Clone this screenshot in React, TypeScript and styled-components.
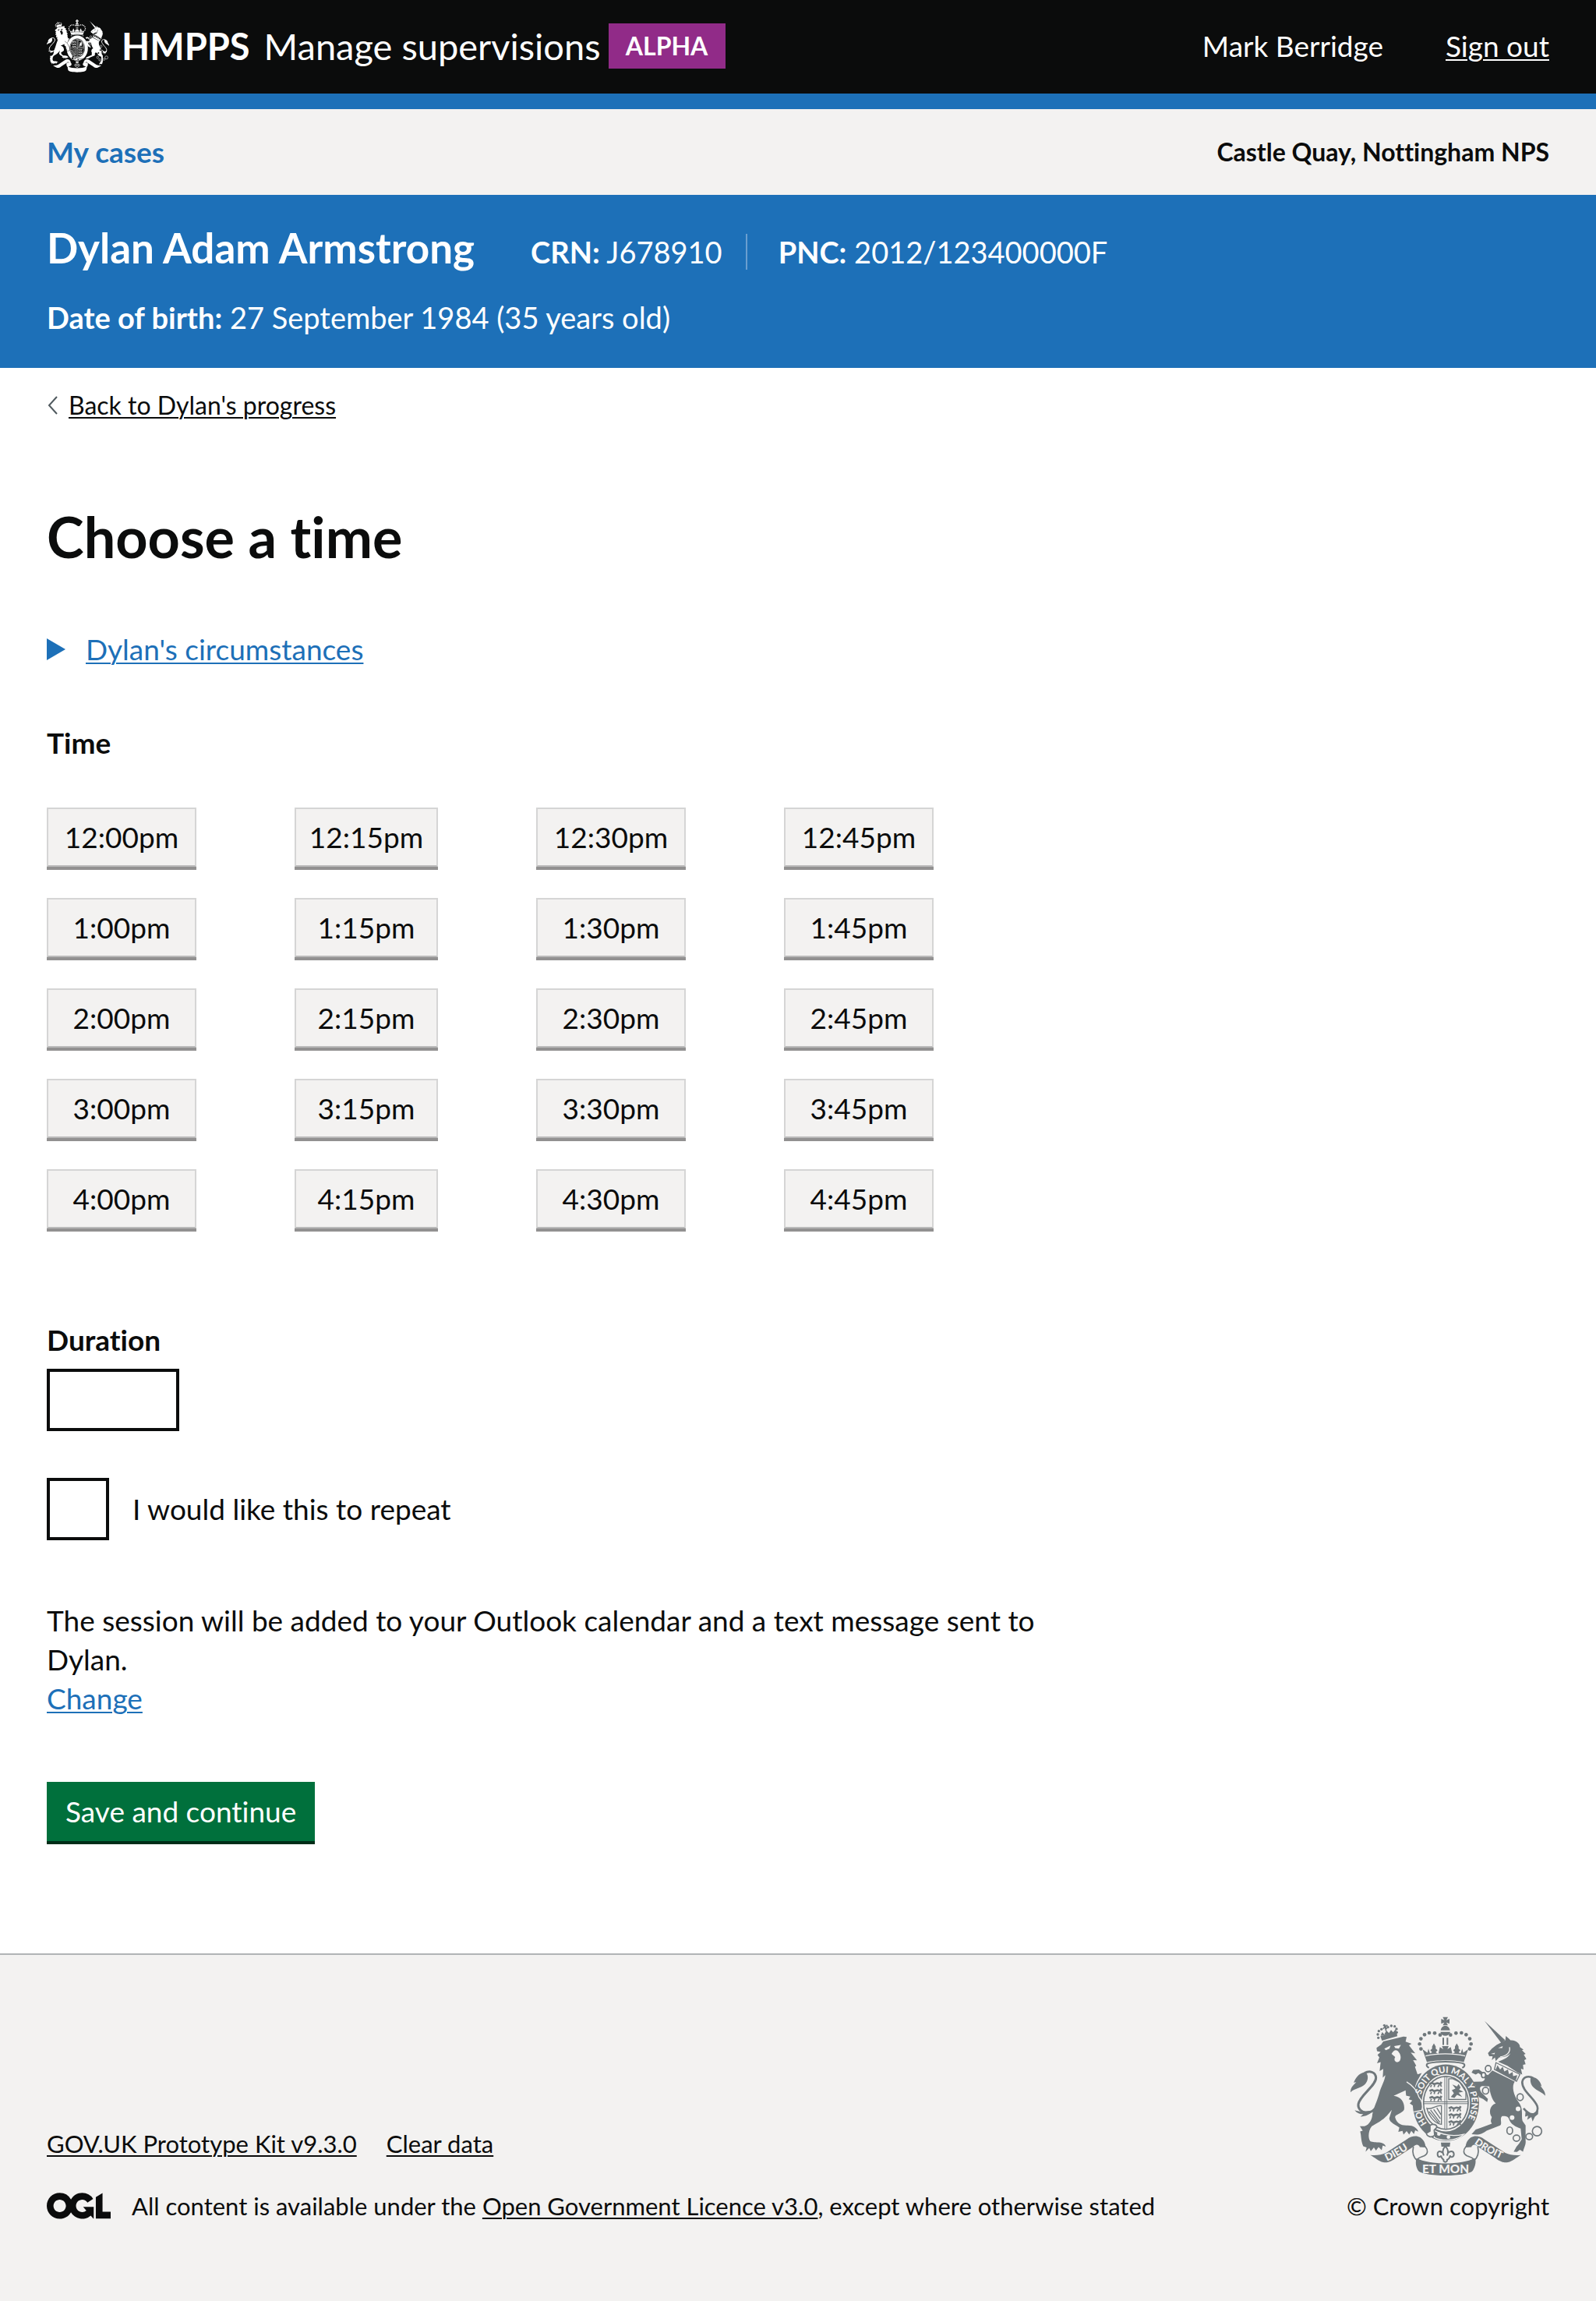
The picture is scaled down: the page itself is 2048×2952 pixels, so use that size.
import React from 'react';
import styled, { createGlobalStyle } from 'styled-components';

const ink = '#0b0c0c';
const blue = '#1d70b8';
const grey = '#f3f2f1';

const GlobalStyle = createGlobalStyle`
  *, *::before, *::after { box-sizing: border-box; }
  body {
    margin: 0;
    background: ${grey};
    color: ${ink};
    font-family: Lato, "Liberation Sans", sans-serif;
    font-size: 37px;
    line-height: 50px;
    font-variant-ligatures: none;
  }
  h1, h2, p, ul, dl, dd { margin: 0; padding: 0; }
  ul { list-style: none; }
  button, input { font: inherit; font-variant-ligatures: none; color: inherit; margin: 0; border-radius: 0; }
`;

const TextLink = styled.a<{ $color?: string }>`
  color: ${(p) => p.$color ?? ink};
  text-decoration: underline;
  text-decoration-thickness: 2px;
  text-underline-offset: 3px;
`;

/* Header */

const Header = styled.header`
  display: flex;
  align-items: center;
  justify-content: space-between;
  padding: 25px 60px 27px;
  background: ${ink};
  color: #fff;
  border-bottom: 20px solid ${blue};
  line-height: 60px;
`;

const Brand = styled.div`
  display: flex;
  align-items: center;
  font-size: 47px;
`;

const Organisation = styled.strong`
  margin: 0 18px 0 16px;
`;

const PhaseTag = styled.strong`
  min-width: 150px;
  margin-left: 10px;
  padding: 0 16px;
  background: #912b88;
  font-size: 32px;
  line-height: 58px;
  text-align: center;
`;

const Account = styled.nav`
  display: flex;
  gap: 80px;
`;

const PrimaryNav = styled.nav`
  display: flex;
  align-items: center;
  justify-content: space-between;
  padding: 30px 60px;
  background: ${grey};
  font-weight: 700;
`;

const NavLink = styled.a`
  color: ${blue};
  text-decoration: none;
`;

const Office = styled.span`
  font-size: 32px;
`;

/* Person banner */

const Banner = styled.section`
  display: grid;
  gap: 32px;
  padding: 36px 60px 40px;
  background: ${blue};
  color: #fff;
  font-size: 38px;
`;

const BannerRow = styled.div`
  display: flex;
  align-items: baseline;
  gap: 72px;
`;

const PersonName = styled.h2`
  font-size: 53px;
  line-height: 64px;
`;

const Identifiers = styled.ul`
  display: flex;
  line-height: 46px;
`;

const Identifier = styled.li`
  & + & {
    margin-left: 30px;
    padding-left: 40px;
    border-left: 2px solid #6a9fd0;
  }
`;

/* Main content */

const Main = styled.main`
  padding: 28px 60px 144px;
  background: #fff;
`;

const BackRow = styled.div`
  display: flex;
  align-items: center;
  gap: 14px;
  margin-bottom: 108px;
  font-size: 32px;
  line-height: 40px;
`;

const Column = styled.div`
  width: 66.66%;
`;

const Title = styled.h1`
  margin-bottom: 80px;
  font-size: 72px;
  line-height: 80px;
`;

const Details = styled.details`
  margin-bottom: 70px;
`;

const Summary = styled.summary`
  display: flex;
  align-items: center;
  gap: 26px;
  width: fit-content;
  cursor: pointer;
  &::-webkit-details-marker { display: none; }
`;

const GroupHeading = styled.h2`
  margin-bottom: 58px;
  font-size: 37px;
`;

const TimeGrid = styled.ul`
  display: grid;
  grid-template-columns: 192px 184px 192px 192px;
  gap: 40px 126px;
  margin-bottom: 118px;
`;

const Button = styled.button`
  height: 76px;
  padding: 0 24px;
  border: 0;
  background: #00703c;
  color: #fff;
  box-shadow: 0 4px 0 #002d18;
  white-space: nowrap;
  cursor: pointer;
`;

const TimeButton = styled(Button)`
  width: 100%;
  padding: 0;
  border: 2px solid #d5d5d5;
  border-bottom-color: #bababa;
  background: ${grey};
  color: ${ink};
  box-shadow: 0 4px 0 #929191;
`;

const Field = styled.div`
  display: flex;
  flex-direction: column;
  align-items: flex-start;
  gap: 12px;
  margin-bottom: 60px;
`;

const FieldLabel = styled.label`
  font-weight: 700;
`;

const DurationInput = styled.input`
  width: 170px;
  height: 80px;
  padding: 10px;
  border: 4px solid ${ink};
  background: #fff;
`;

const CheckRow = styled.div`
  display: flex;
  align-items: center;
  gap: 30px;
  margin-bottom: 78px;
`;

const Checkbox = styled.input`
  appearance: none;
  width: 80px;
  height: 80px;
  border: 4px solid ${ink};
  background: #fff;
  &:checked { box-shadow: inset 0 0 0 14px #fff; background: ${ink}; }
`;

const Note = styled.p`
  margin-bottom: 82px;
`;

/* Footer */

const Footer = styled.footer`
  display: flex;
  align-items: flex-end;
  justify-content: space-between;
  padding: 79px 60px 97px;
  border-top: 2px solid #b1b4b6;
  background: ${grey};
  font-size: 31px;
`;

const FooterMeta = styled.div`
  display: grid;
  gap: 30px;
`;

const FooterLinks = styled.ul`
  display: flex;
  gap: 38px;
`;

const Licence = styled.div`
  display: flex;
  align-items: center;
  gap: 27px;
`;

const Copyright = styled.div`
  display: flex;
  flex-direction: column;
  align-items: center;
  gap: 13px;
`;

/* Drawings */

const CROWN_BEADS = [
  [441, 393], [420, 386], [399, 385], [381, 392], [367, 408], [362, 428], [367, 447],
];

const GARTER_LINE = 'M463 771 A99 116 0 0 1 463 539 A99 116 0 0 1 463 771';

function Lions({ x, y, color }: { x: number; y: number; color: string }) {
  return (
    <g fill="none" stroke={color} strokeWidth="5">
      {[0, 27, 54].map((dy) => (
        <g key={dy}>
          <path d={`M${x} ${y + dy} l10 -4 l8 5 l12 -4 l12 3 l4 -8`} strokeWidth="8" />
          <path d={`M${x + 4} ${y + dy + 12} l4 -8 M${x + 18} ${y + dy + 12} l2 -9 M${x + 32} ${y + dy + 12} l6 -9 M${x + 46} ${y + dy + 11} l-4 -9`} />
        </g>
      ))}
    </g>
  );
}

function RoyalArms({ width, height, color, paper, motto }: {
  width: number; height: number; color: string; paper: string; motto?: boolean;
}) {
  return (
    <svg width={width} height={height} viewBox="96 322 750 616" preserveAspectRatio="none" fill={color} aria-hidden="true">
      {/* lion */}
      <path d="M196 443 L214 430 L222 418 L300 399 L312 401 L308 419 L331 427 L321 433 L345 464 L328 461 L352 491 L337 490 L349 512 L344 516 L354 545 L370 540 L352 572 L345 590 L352 620 C360 635 372 645 372 668 L366 681 L358 668 L355 683 L346 670 L342 683 L336 665 L324 657 L334 646 L320 641 L326 631 L310 627 L308 607 L262 628 C296 632 306 662 302 682 C292 698 264 700 268 712 C275 735 290 742 310 742 C335 740 352 750 357 766 L345 761 L340 775 L330 763 L322 777 L312 764 L300 777 L296 763 L280 767 L284 750 C268 738 247 732 245 715 L255 682 L238 702 C222 722 195 735 178 745 C165 760 162 790 172 803 C190 812 225 800 232 824 L220 819 L216 837 L204 825 L194 839 L186 827 L174 841 L168 829 L154 843 L158 827 L145 822 C135 800 138 780 133 765 L143 762 L132 745 L150 745 C170 740 180 715 180 700 C186 670 198 650 206 620 C214 590 228 570 230 548 L220 558 L222 524 L208 532 L212 498 L198 502 L207 480 L200 470 L212 459 L198 456 Z" />
      <path d="M226 446 L250 434 L246 446 L232 452 Z M264 436 L290 432 L282 446 L268 444 Z M254 466 C262 448 276 448 282 460 C292 470 292 496 278 498 C266 498 262 488 268 478 Z" fill={paper} />
      <path d="M200 662 C180 710 122 695 126 660 C132 625 194 590 194 558 C192 534 168 530 150 540" fill="none" stroke={color} strokeWidth="9" />
      <path d="M154 536 C125 540 115 562 108 577 L118 575 C104 590 96 596 96 614 C110 600 135 598 150 585 C160 575 166 560 160 545 Z" />
      <path d="M150 688 C140 689 125 688 112 683 C120 695 133 699 145 698 L134 708 C155 707 172 700 182 684 Z" />
      {/* lion's crown */}
      <path d="M211 398 L274 382 L276 398 L217 415 Z M212 396 L218 382 L226 391 L234 376 L244 386 L252 374 L260 383 L270 371 L274 384 Z" />
      <path d="M222 354 L236 370 M238 355 L221 369 M227 352 L233 378" stroke={color} strokeWidth="5" />
      {[[203, 404], [201, 391], [205, 378], [215, 371], [240, 363], [253, 358], [266, 360], [273, 370], [274, 383]].map(([cx, cy]) => (
        <circle key={`${cx}-${cy}`} cx={cx} cy={cy} r="5" />
      ))}
      {/* imperial crown */}
      <path d="M451 324 L471 324 L465 336 L477 331 L477 350 L465 345 L471 356 L451 356 L457 345 L445 350 L445 331 L457 336 Z" />
      <path d="M443 375 C446 362 453 358 461 358 C469 358 476 362 479 375 Z M442 381 H480 C478 391 470 396 461 396 C452 396 444 391 442 381 Z" />
      {CROWN_BEADS.map(([cx, cy]) => (
        <g key={cy}>
          <circle cx={cx} cy={cy} r="7" />
          <circle cx={922 - cx} cy={cy} r="7" />
        </g>
      ))}
      <path d="M453 404 V432 M469 404 V432" stroke={color} strokeWidth="6" />
      <path d="M373 448 L392 462 L396 446 L402 464 L410 460 L403 452 L410 446 L410 438 L417 426 L424 438 L424 446 L431 452 L424 460 L434 466 L440 440 L453 448 L448 436 L474 436 L469 448 L482 440 L488 466 L498 460 L491 452 L498 446 L498 438 L505 426 L512 438 L512 446 L519 452 L512 460 L520 464 L526 446 L530 462 L549 448 L532 498 C500 489 422 489 390 498 Z" />
      <path d="M385 474 C430 463 492 463 537 474" fill="none" stroke={paper} strokeWidth="4" />
      {/* garter */}
      <path d="M398 520 C384 512 388 503 398 502 C430 494 492 494 526 502 C538 504 538 514 526 520" fill="none" stroke={color} strokeWidth="6" />
      <ellipse cx="463" cy="655" rx="128" ry="148" />
      <ellipse cx="463" cy="655" rx="93" ry="110" fill={paper} />
      <ellipse cx="463" cy="655" rx="86" ry="102" fill="none" stroke={color} strokeWidth="5" />
      <path d="M459 553 V757 M467 553 V757 M377 651 H549 M377 658 H549" stroke={color} strokeWidth="3" />
      <Lions x={400} y={582} color={color} />
      <Lions x={474} y={676} color={color} />
      <path d="M474 562 V642 H540 V612 L516 575 L490 562 Z" fill="none" stroke={color} strokeWidth="4" />
      <path d="M482 632 L494 618 L486 606 L500 600 L488 584 L506 592 L512 582 L520 596 L514 604 L530 612 L512 616 L526 632 L506 624 L496 636 Z" />
      <path d="M390 676 C410 684 424 662 446 666 V738 C420 734 398 708 390 676 Z M404 682 L440 730 M416 680 L442 716 M428 674 L444 700 M398 688 L436 734" fill="none" stroke={color} strokeWidth="4" />
      {/* foreleg over the garter */}
      <path d="M312 574 C336 588 352 606 360 634 C372 645 378 668 370 684 L340 690" fill="none" stroke={paper} strokeWidth="4" />
      {motto && (
        <g fill={paper} fontFamily="Lato, sans-serif" fontSize="34" fontWeight="900">
          <path id="garter-line" d={GARTER_LINE} fill="none" />
          <text><textPath href="#garter-line" startOffset="84">HO</textPath></text>
          <text><textPath href="#garter-line" startOffset="200">SOIT QUI MAL Y PENSE</textPath></text>
        </g>
      )}
      {/* buckle and belt end */}
      <path d="M418 762 C450 778 490 786 532 776 C510 800 450 806 418 788 Z" stroke={paper} strokeWidth="4" />
      <path d="M402 742 C412 734 430 738 428 750 L418 760 L420 780 C408 790 390 786 388 772 L402 764 Z" fill={paper} stroke={color} strokeWidth="5" />
      <circle cx="436" cy="775" r="7" fill={paper} />
      <circle cx="473" cy="787" r="7" fill={paper} />
      {/* pendant */}
      <path d="M444 808 H480 L478 824 H446 Z" />
      <path d="M461 822 C446 838 452 850 455 858 C452 838 430 838 431 852 C431 864 442 868 444 858 C446 866 450 872 454 874 C452 886 470 886 468 874 C474 872 478 866 479 858 C482 868 494 864 494 852 C492 838 470 838 468 858 C472 850 476 838 461 822 Z" fill={paper} stroke={color} strokeWidth="6" />
      {/* unicorn */}
      <path d="M612 339 L691 413 L677 425 Z" />
      <path d="M625 463 L640 446 L658 432 L692 414 L694 397 L706 408 L712 414 C735 412 750 430 748 440 L762 450 L756 452 L770 466 L763 469 L773 486 L765 490 L770 506 L760 508 L762 526 L752 523 L757 546 L740 538 L700 512 L664 496 C690 488 708 476 712 462 C708 472 690 480 668 480 L655 494 L652 480 L640 490 L643 475 L630 475 Z" />
      <path d="M664 444 L682 436 L680 444 Z M636 466 L652 462 L650 468 Z" fill={paper} />
      <path d="M672 478 C700 474 712 458 708 440" fill="none" stroke={paper} strokeWidth="4" />
      <path d="M656 500 L748 545 L735 572 L650 526 Z" fill={paper} stroke={color} strokeWidth="4" />
      <path d="M654 528 L662 510 L672 526 L682 516 L688 534 L702 526 L706 544 L720 536 L722 552 L738 548 L732 570 Z" />
      <path d="M642 530 L728 573 C716 590 722 625 745 655 C762 680 753 700 758 725 L770 742 L770 800 C772 815 765 825 760 843 L748 836 L737 844 L724 843 L735 824 L745 812 L755 795 L751 754 C735 748 712 740 705 715 C700 705 688 706 680 706 C668 715 682 735 672 742 L620 762 C605 772 598 777 580 777 L562 776 L578 758 L600 750 L640 735 C633 725 638 718 640 710 C628 695 630 665 655 657 C640 645 632 612 630 592 L604 590 C592 592 592 602 600 615 L625 640 L622 652 L606 640 L592 634 C580 612 572 600 577 588 L568 574 L602 573 C612 570 616 562 610 556 L588 540 L578 546 L562 538 L568 528 L590 526 L612 542 L625 548 Z" />
      <g fill={paper} stroke={color} strokeWidth="5">
        <ellipse cx="626" cy="523" rx="11" ry="12" />
        <ellipse cx="608" cy="548" rx="8" ry="10" />
        <ellipse cx="616" cy="608" rx="12" ry="13" />
        <ellipse cx="749" cy="633" rx="12" ry="13" />
        <ellipse cx="709" cy="762" rx="11" ry="14" />
        <ellipse cx="735" cy="791" rx="13" ry="12" />
        <ellipse cx="784" cy="785" rx="13" ry="12" />
        <circle cx="814" cy="764" r="18" />
      </g>
      <circle cx="741" cy="678" r="9" fill={paper} />
      <circle cx="718" cy="712" r="9" fill={paper} />
      <path d="M762 676 C800 720 822 690 815 668 C805 638 755 608 757 575 C760 552 785 550 800 560" fill="none" stroke={color} strokeWidth="8" />
      <path d="M790 556 C815 555 828 575 832 592 L826 588 C835 600 846 610 846 628 C835 615 812 608 800 595 C790 585 786 570 790 556 Z" />
      <path d="M770 688 L768 708 L780 704 L776 720 L792 710 L797 727 L806 708 L818 698 L819 678 C805 700 790 700 770 688 Z" />
      {/* ribbon */}
      {[false, true].map((flip) => (
        <g key={String(flip)} transform={flip ? 'translate(924 0) scale(-1 1)' : undefined}>
          <path d="M172 856 C195 858 215 856 232 848 L312 796 C330 782 350 780 364 788 C380 800 384 812 385 826 L362 823 C354 812 346 816 338 824 L270 868 C250 884 235 886 222 884 C205 880 190 866 172 856 Z" />
          <path d="M362 823 L384 824 C396 838 394 852 380 859 C362 866 352 868 354 880 C338 866 332 850 338 824" fill={motto ? paper : color} stroke={color} strokeWidth="5" />
        </g>
      ))}
      <path d="M350 868 C400 895 524 895 574 868 C581 878 577 898 568 914 C556 942 368 942 355 914 C346 898 346 880 350 868 Z" />
      {motto && (
        <g fill={paper} fontFamily="Lato, sans-serif" fontWeight="900">
          <path id="ribbon-left" d="M236 880 Q290 856 348 812" fill="none" />
          <path id="ribbon-right" d="M572 812 Q630 854 704 882" fill="none" />
          <text fontSize="40"><textPath href="#ribbon-left">DIEU</textPath></text>
          <text fontSize="38"><textPath href="#ribbon-right">DROIT</textPath></text>
          <text fontSize="46" x="462" y="927" textAnchor="middle">ET MON</text>
        </g>
      )}
    </svg>
  );
}

function OglLogo() {
  return (
    <svg width="82" height="34" viewBox="0 0 483 196" fill={ink} role="img" aria-label="OGL">
      <path d="M421.500 142.800V.1l-50.700 32.300v161.100h112.400v-50.700zm-122.300-9.600A47.120 47.120 0 0 1 221 97.800c0-26 21.100-47.100 47.100-47.100 16.700 0 31.400 8.700 39.700 21.800l42.700-27.200A97.630 97.630 0 0 0 268.100 0c-36.500 0-68.300 20.100-85.100 49.700A98 98 0 0 0 97.800 0C43.900 0 0 43.900 0 97.800s43.900 97.800 97.800 97.800c36.500 0 68.300-20.100 85.100-49.700a97.760 97.760 0 0 0 149.600 25.400l19.400 22.200h3v-87.800h-80l24.300 27.500zM97.800 145c-26 0-47.100-21.100-47.100-47.100s21.100-47.100 47.100-47.100 47.100 21.100 47.100 47.100S123.800 145 97.800 145" />
    </svg>
  );
}

const TIMES = [12, 1, 2, 3, 4].flatMap((hour) =>
  ['00', '15', '30', '45'].map((minute) => `${hour}:${minute}pm`),
);

export default function App() {
  return (
    <>
      <GlobalStyle />
      <Header>
        <Brand>
          <RoyalArms width={80} height={68} color="#fff" paper={ink} />
          <Organisation>HMPPS</Organisation>
          <span>Manage supervisions</span>
          <PhaseTag>ALPHA</PhaseTag>
        </Brand>
        <Account>
          <span>Mark Berridge</span>
          <TextLink href="#" $color="#fff">Sign out</TextLink>
        </Account>
      </Header>
      <PrimaryNav>
        <NavLink href="#">My cases</NavLink>
        <Office>Castle Quay, Nottingham NPS</Office>
      </PrimaryNav>
      <Banner>
        <BannerRow>
          <PersonName>Dylan Adam Armstrong</PersonName>
          <Identifiers>
            <Identifier><strong>CRN:</strong> J678910</Identifier>
            <Identifier><strong>PNC:</strong> 2012/123400000F</Identifier>
          </Identifiers>
        </BannerRow>
        <p><strong>Date of birth:</strong> 27 September 1984 (35 years old)</p>
      </Banner>
      <Main>
        <BackRow>
          <svg width="14" height="24" viewBox="0 0 14 24" fill="none" stroke="#505a5f" strokeWidth="2" aria-hidden="true">
            <path d="M13 1 L3 12 L13 23" />
          </svg>
          <TextLink href="#">Back to Dylan's progress</TextLink>
        </BackRow>
        <Column>
          <Title>Choose a time</Title>
          <Details>
            <Summary>
              <svg width="24" height="28" viewBox="0 0 24 28" fill={blue} aria-hidden="true">
                <path d="M0 0 L24 14 L0 28 Z" />
              </svg>
              <TextLink as="span" $color={blue}>Dylan's circumstances</TextLink>
            </Summary>
          </Details>
          <GroupHeading id="time-heading">Time</GroupHeading>
          <TimeGrid aria-labelledby="time-heading">
            {TIMES.map((time) => (
              <li key={time}><TimeButton type="button">{time}</TimeButton></li>
            ))}
          </TimeGrid>
          <Field>
            <FieldLabel htmlFor="duration">Duration</FieldLabel>
            <DurationInput id="duration" type="text" />
          </Field>
          <CheckRow>
            <Checkbox id="repeat" type="checkbox" />
            <label htmlFor="repeat">I would like this to repeat</label>
          </CheckRow>
          <Note>
            The session will be added to your Outlook calendar and a text message sent to Dylan.
            <br />
            <TextLink href="#" $color={blue}>Change</TextLink>
          </Note>
          <Button type="submit">Save and continue</Button>
        </Column>
      </Main>
      <Footer>
        <FooterMeta>
          <FooterLinks>
            <li><TextLink href="#">GOV.UK Prototype Kit v9.3.0</TextLink></li>
            <li><TextLink href="#">Clear data</TextLink></li>
          </FooterLinks>
          <Licence>
            <OglLogo />
            <p>
              All content is available under the <TextLink href="#">Open Government Licence v3.0</TextLink>, except where otherwise stated
            </p>
          </Licence>
        </FooterMeta>
        <Copyright>
          <RoyalArms width={250} height={205} color="#6f777b" paper={grey} motto />
          <span>© Crown copyright</span>
        </Copyright>
      </Footer>
    </>
  );
}
